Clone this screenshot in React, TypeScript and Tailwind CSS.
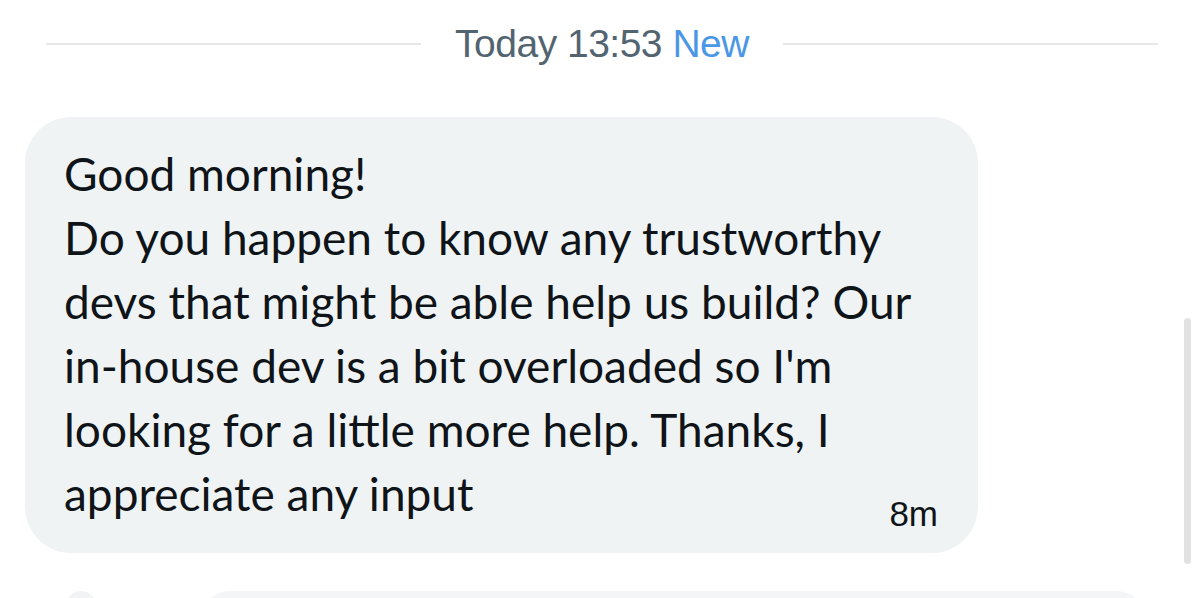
export default function App() {
  const lines = [
    "Good morning!",
    "Do you happen to know any trustworthy",
    "devs that might be able help us build? Our",
    "in-house dev is a bit overloaded so I'm",
    "looking for a little more help. Thanks, I",
  ];

  return (
    <div className="relative w-[1200px] h-[598px] overflow-hidden bg-white">
      {/* date divider */}
      <div className="flex items-center pt-[22px] pl-[46px] pr-[42px]">
        <div className="flex-1 h-[2px] bg-[#e6e8e9]" />
        <div
          className="px-[34px] text-[39px] leading-[44px] text-[#536471] tracking-[-0.5px]"
          style={{ fontFamily: '"Liberation Sans", Arial, sans-serif' }}
        >
          Today 13:53 <span className="text-[#4b97e6]">New</span>
        </div>
        <div className="flex-1 h-[2px] bg-[#e6e8e9]" />
      </div>

      {/* message bubble */}
      <div className="mt-[51px] ml-[25px] w-[953px] rounded-[46px] bg-[#eff3f4] pl-[39px] pr-[40px] pt-[25px] pb-[27px]">
        <div
          className="text-[46px] leading-[64px] text-[#0f1419] whitespace-nowrap"
          style={{ fontFamily: "Lato, sans-serif" }}
        >
          {lines.map((l, i) => (
            <div key={i}>{l}</div>
          ))}
          <div className="flex items-end justify-between">
            <span>appreciate any input</span>
            <span
              className="text-[35px] leading-[36px] mb-[-6px]"
              style={{ fontFamily: '"Liberation Sans", Arial, sans-serif' }}
            >
              8m
            </span>
          </div>
        </div>
      </div>

      {/* next message peeking in */}
      <div className="flex items-start mt-[38px] pl-[66px]">
        <div className="w-[30px] h-[30px] rounded-full bg-[#f2f3f4]" />
        <div className="ml-[104px] w-[946px] h-[40px] rounded-t-[30px] bg-[#f3f5f6]" />
      </div>

      {/* scrollbar */}
      <div className="absolute right-[9px] top-[318px] w-[7px] h-[246px] rounded-full bg-[#e2e2e2]" />
    </div>
  );
}
